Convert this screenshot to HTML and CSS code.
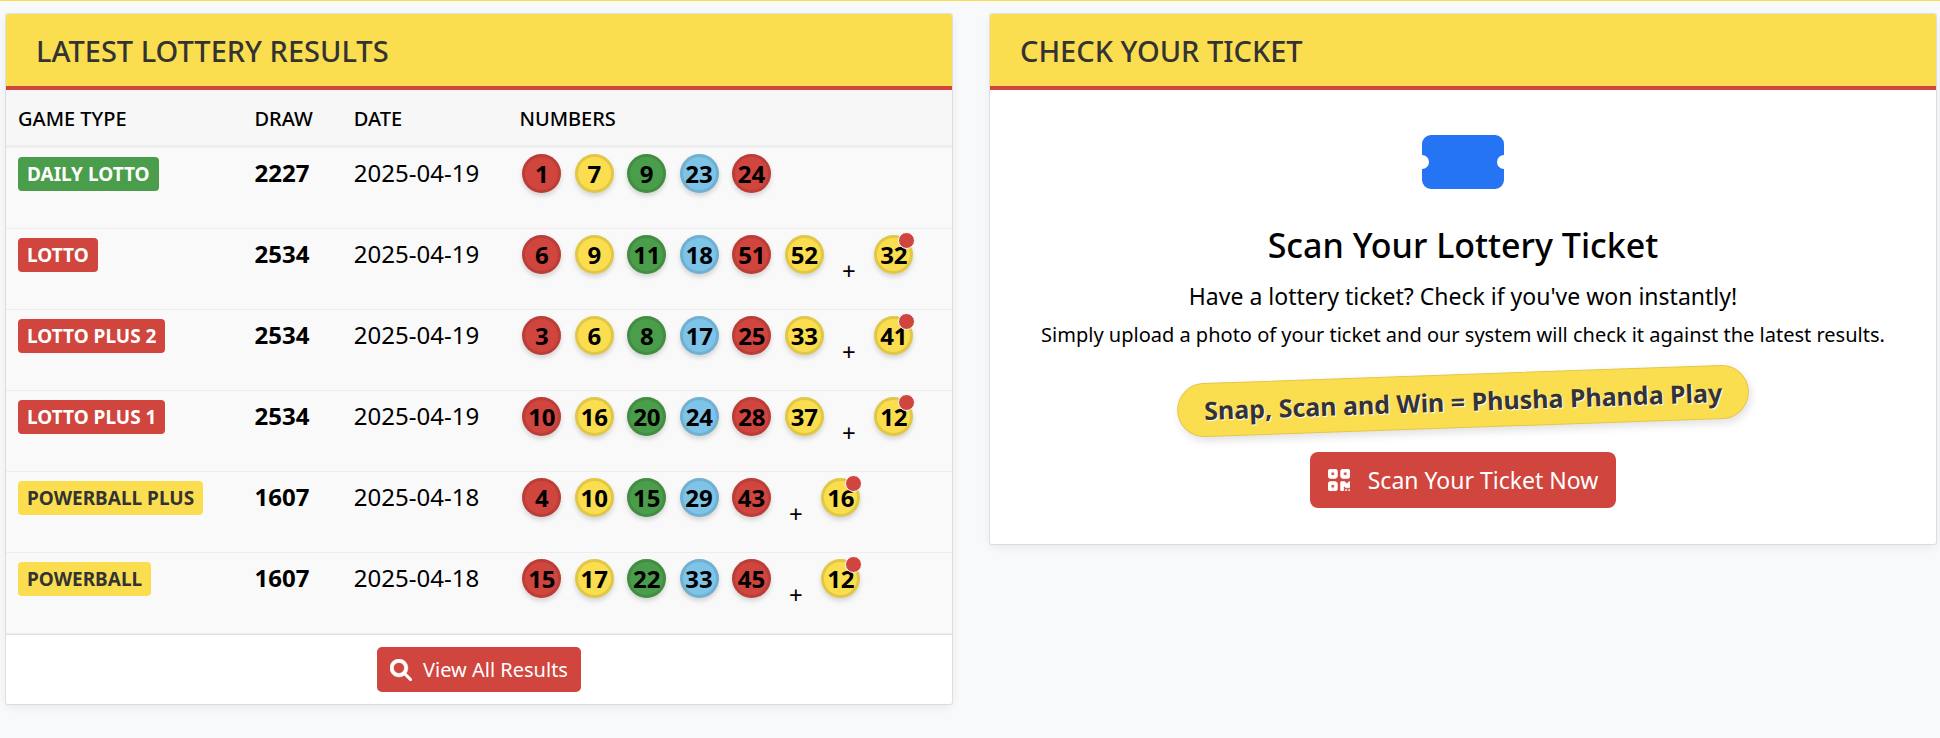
FILE: index.html
```html
<!DOCTYPE html>
<html lang="en">
<head>
<meta charset="utf-8">
<title>Lottery Results</title>
<link rel="stylesheet" href="styles.css">
</head>
<body>
<main class="page">
  <section class="card">
    <h2 class="card-header">LATEST LOTTERY RESULTS</h2>
    <table class="results">
      <thead>
        <tr><th class="col-game">GAME TYPE</th><th class="col-draw">DRAW</th><th class="col-date">DATE</th><th>NUMBERS</th></tr>
      </thead>
      <tbody>
        <tr>
          <td><span class="badge green">DAILY LOTTO</span></td><td class="draw">2227</td><td>2025-04-19</td>
          <td><div class="numbers"><div class="balls five"><span class="ball red">1</span><span class="ball yellow">7</span><span class="ball green">9</span><span class="ball blue">23</span><span class="ball red">24</span></div></div></td>
        </tr>
        <tr>
          <td><span class="badge red">LOTTO</span></td><td class="draw">2534</td><td>2025-04-19</td>
          <td><div class="numbers"><div class="balls"><span class="ball red">6</span><span class="ball yellow">9</span><span class="ball green">11</span><span class="ball blue">18</span><span class="ball red">51</span><span class="ball yellow">52</span></div><span class="plus">+</span><span class="ball yellow bonus">32</span></div></td>
        </tr>
        <tr>
          <td><span class="badge red">LOTTO PLUS 2</span></td><td class="draw">2534</td><td>2025-04-19</td>
          <td><div class="numbers"><div class="balls"><span class="ball red">3</span><span class="ball yellow">6</span><span class="ball green">8</span><span class="ball blue">17</span><span class="ball red">25</span><span class="ball yellow">33</span></div><span class="plus">+</span><span class="ball yellow bonus">41</span></div></td>
        </tr>
        <tr>
          <td><span class="badge red">LOTTO PLUS 1</span></td><td class="draw">2534</td><td>2025-04-19</td>
          <td><div class="numbers"><div class="balls"><span class="ball red">10</span><span class="ball yellow">16</span><span class="ball green">20</span><span class="ball blue">24</span><span class="ball red">28</span><span class="ball yellow">37</span></div><span class="plus">+</span><span class="ball yellow bonus">12</span></div></td>
        </tr>
        <tr>
          <td><span class="badge yellow">POWERBALL PLUS</span></td><td class="draw">1607</td><td>2025-04-18</td>
          <td><div class="numbers"><div class="balls five"><span class="ball red">4</span><span class="ball yellow">10</span><span class="ball green">15</span><span class="ball blue">29</span><span class="ball red">43</span></div><span class="plus">+</span><span class="ball yellow bonus">16</span></div></td>
        </tr>
        <tr>
          <td><span class="badge yellow">POWERBALL</span></td><td class="draw">1607</td><td>2025-04-18</td>
          <td><div class="numbers"><div class="balls five"><span class="ball red">15</span><span class="ball yellow">17</span><span class="ball green">22</span><span class="ball blue">33</span><span class="ball red">45</span></div><span class="plus">+</span><span class="ball yellow bonus">12</span></div></td>
        </tr>
      </tbody>
    </table>
    <div class="card-footer">
      <button class="btn" type="button">
        <svg class="icon-search" viewBox="0 0 512 512" aria-hidden="true"><path fill="currentColor" d="M416 208c0 45.900-14.900 88.300-40 122.700L502.600 457.400c12.500 12.500 12.500 32.800 0 45.300s-32.800 12.500-45.300 0L330.700 376c-34.400 25.200-76.800 40-122.700 40C93.100 416 0 322.900 0 208S93.100 0 208 0S416 93.100 416 208zM208 336a128 128 0 1 0 0-256 128 128 0 1 0 0 256z" stroke="currentColor" stroke-width="12"/></svg>
        View All Results
      </button>
    </div>
  </section>

  <section class="card">
    <h2 class="card-header">CHECK YOUR TICKET</h2>
    <div class="scan">
      <svg class="icon-ticket" viewBox="0 0 82 54" aria-hidden="true"><path fill="currentColor" d="M9 0H73A9 9 0 0 1 82 9V20A7 7 0 0 0 82 34V45A9 9 0 0 1 73 54H9A9 9 0 0 1 0 45V34A7 7 0 0 0 0 20V9A9 9 0 0 1 9 0Z"/></svg>
      <h3 class="scan-title">Scan Your Lottery Ticket</h3>
      <p class="lead">Have a lottery ticket? Check if you've won instantly!</p>
      <p class="note">Simply upload a photo of your ticket and our system will check it against the latest results.</p>
      <div class="slogan">Snap, Scan and Win = Phusha Phanda Play</div>
      <button class="btn btn-large" type="button">
        <svg class="icon-qr" viewBox="0 32 448 448" aria-hidden="true"><path fill="currentColor" stroke="currentColor" stroke-width="12" d="M0 80C0 53.500 21.500 32 48 32l96 0c26.500 0 48 21.500 48 48l0 96c0 26.500-21.500 48-48 48l-96 0c-26.500 0-48-21.500-48-48L0 80zM64 96l0 64 64 0 0-64L64 96zM0 336c0-26.500 21.500-48 48-48l96 0c26.500 0 48 21.500 48 48l0 96c0 26.500-21.500 48-48 48l-96 0c-26.500 0-48-21.500-48-48l0-96zm64 16l0 64 64 0 0-64-64 0zM304 32l96 0c26.500 0 48 21.500 48 48l0 96c0 26.500-21.500 48-48 48l-96 0c-26.500 0-48-21.500-48-48l0-96c0-26.500 21.500-48 48-48zm80 64l-64 0 0 64 64 0 0-64zM256 304c0-8.800 7.200-16 16-16l64 0c8.800 0 16 7.200 16 16s7.200 16 16 16l32 0c8.800 0 16-7.200 16-16s7.200-16 16-16s16 7.200 16 16l0 96c0 8.800-7.200 16-16 16l-64 0c-8.800 0-16-7.200-16-16s-7.200-16-16-16s-16 7.200-16 16l0 64c0 8.800-7.200 16-16 16l-32 0c-8.800 0-16-7.200-16-16l0-160zM368 480a16 16 0 1 1 0-32 16 16 0 1 1 0 32zm64 0a16 16 0 1 1 0-32 16 16 0 1 1 0 32z"/></svg>
        Scan Your Ticket Now
      </button>
    </div>
  </section>
</main>
</body>
</html>
```
FILE: styles.css
```css
* { box-sizing: border-box; }

body {
  margin: 0;
  border-top: 1px solid #fbde4f;
  background: #f8f9fb;
  color: #000;
  font-family: "Segoe UI", "Noto Sans", "Open Sans", sans-serif;
}

.page {
  display: grid;
  grid-template-columns: 1fr 1fr;
  align-items: start;
  gap: 38px;
  padding: 13px 4px 24px 6px;
}

.card {
  background: #fff;
  border-radius: 2px;
  box-shadow: 0 0 0 1px rgba(0, 0, 0, .08), 0 3px 10px rgba(0, 0, 0, .07);
}

.card-header {
  margin: 0;
  padding: 17px 30px 15px;
  border-bottom: 4px solid #d0453e;
  border-radius: 2px 2px 0 0;
  background: #fbde4f;
  color: #333;
  font-size: 29px;
  font-weight: 500;
  line-height: 40px;
}

.results {
  width: 100%;
  table-layout: fixed;
  border-collapse: separate;
  border-spacing: 0;
  background: #f9f9f9;
  font-size: 24px;
}

.col-game { width: 25%; }
.col-draw { width: 10.5%; }
.col-date { width: 17.5%; }

th {
  padding: 13px 12px 11px;
  border-bottom: 3px solid #eee;
  background: #f7f7f7;
  font-size: 20px;
  font-weight: 500;
  line-height: 31px;
  text-align: left;
}

td {
  height: 81px;
  padding: 6px 12px;
  border-bottom: 1px solid #ededed;
  line-height: 38px;
  vertical-align: top;
}

.draw { font-weight: 700; }

.badge {
  display: inline-block;
  margin-top: 3px;
  padding: 1px 9px 0;
  border-radius: 4px;
  font-size: 19px;
  font-weight: 700;
  line-height: 33px;
  vertical-align: top;
}

.red { background: #d0453e; }
.yellow { background: #fbde4f; }
.green { background: #4a9d4a; }
.blue { background: #7dc4e8; }
.badge.red, .badge.green { color: #fff; }
.badge.yellow { color: #333; }

.numbers {
  display: flex;
  padding-left: 3px;
}

.balls {
  display: grid;
  grid-template-columns: repeat(6, 1fr);
  width: 315px;
}

.balls.five {
  grid-template-columns: repeat(5, 1fr);
  width: 262px;
}

.ball {
  position: relative;
  width: 39px;
  height: 39px;
  border-radius: 50%;
  box-shadow: inset 0 0 0 3px rgba(0, 0, 0, .1), 0 3px 5px rgba(0, 0, 0, .15);
  font-weight: 700;
  line-height: 40px;
  text-align: center;
}

.bonus::after {
  content: "";
  position: absolute;
  top: -3px;
  right: -2px;
  width: 15px;
  height: 15px;
  border: 1px solid #fff;
  border-radius: 50%;
  background: #d0453e;
}

.plus {
  width: 37px;
  padding-top: 17px;
  padding-right: 14px;
  text-align: center;
}

.card-footer {
  display: flex;
  justify-content: center;
  padding: 12px;
  border-top: 1px solid #dedee4;
}

.btn {
  display: flex;
  align-items: center;
  gap: 11px;
  height: 45px;
  padding: 0 13px;
  border: 0;
  border-radius: 5px;
  background: #d0453e;
  color: #fff;
  font-family: inherit;
  font-size: 20px;
}

.icon-search {
  width: 22px;
  height: 22px;
}

.scan {
  display: flex;
  flex-direction: column;
  align-items: center;
  padding: 45px 36px 36px;
  text-align: center;
}

.icon-ticket {
  width: 82px;
  height: 54px;
  color: #2574f4;
}

.scan-title {
  margin: 33px 0 0;
  font-size: 34px;
  font-weight: 500;
  line-height: 46px;
}

.lead, .note { margin: 0; }

.lead {
  margin-top: 10px;
  font-size: 23px;
  line-height: 36px;
}

.note {
  margin-top: 5px;
  font-size: 20px;
  line-height: 31px;
}

.slogan {
  margin: 24px 0;
  padding: 0 26px;
  border: 1px solid #e2c847;
  border-radius: 27px;
  background: #fbde4f;
  box-shadow: 2px 4px 8px rgba(0, 0, 0, .12);
  color: #333;
  font-size: 25px;
  font-weight: 700;
  line-height: 52px;
  text-shadow: 1px 1px 1px #fff;
  transform: rotate(-2deg);
}

.btn-large {
  gap: 18px;
  height: 56px;
  padding: 0 18px;
  border-radius: 8px;
  font-size: 23px;
}

.icon-qr {
  width: 22px;
  height: 22px;
}
```
